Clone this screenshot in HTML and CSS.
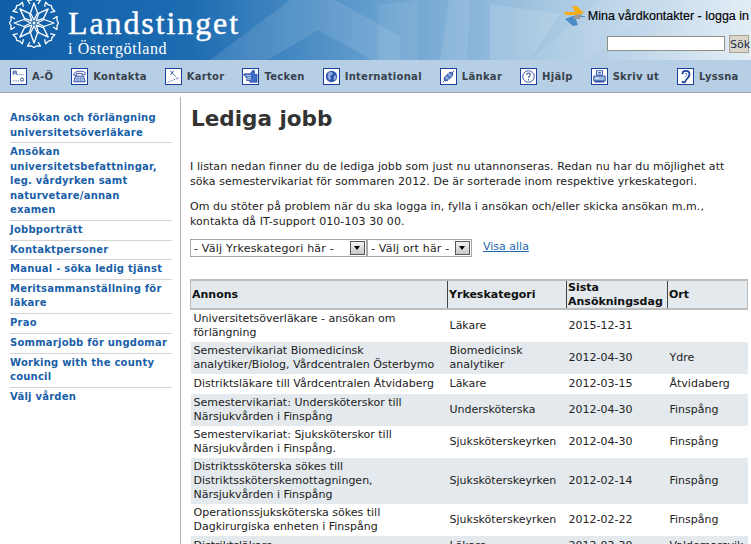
FILE: index.html
```html
<!DOCTYPE html>
<html lang="sv">
<head>
<meta charset="utf-8">
<title>Lediga jobb</title>
<link rel="stylesheet" href="styles.css">
</head>
<body>
<div class="page">
<header class="top">
  <svg class="top-art" viewBox="0 0 751 60" width="751" height="60" aria-hidden="true">
    <path d="M210 60 L290 0 H335 L400 36 L400 60 H372 L318 30 L268 60Z" fill="#fff" opacity=".1"/>
    <path d="M378 60 V5 L418 0 V60Z" fill="#fff" opacity=".08"/>
    <path d="M440 60 L449 0 H470 L467 60Z" fill="#fff" opacity=".1"/>
    <path d="M490 60 V4 L560 14 L530 60Z" fill="#fff" opacity=".12"/>
    <path d="M530 60 L600 0 H660 L590 60Z" fill="#fff" opacity=".08"/>
  </svg>
  <a class="brand" href="#">
    <svg class="flower" viewBox="-25 -25 50 50" width="50" height="50" aria-hidden="true">
      <g fill="none" stroke="#fff" stroke-width="1.3" stroke-linejoin="round">
        <g id="p"><path d="M0 -3 L-3.5 -10 L0 -20 L3.5 -10Z"/><path d="M-4 -19 L-6.5 -23 L-2.5 -23 L0 -24.5 L2.5 -23 L6.5 -23 L4 -19"/></g>
        <use href="#p" transform="rotate(45)"/><use href="#p" transform="rotate(90)"/><use href="#p" transform="rotate(135)"/>
        <use href="#p" transform="rotate(180)"/><use href="#p" transform="rotate(225)"/><use href="#p" transform="rotate(270)"/><use href="#p" transform="rotate(315)"/>
      </g>
      <circle r="1.5" fill="#fff"/>
    </svg>
    <span class="brand-text">
      <span class="brand-name">Landstinget</span>
      <span class="brand-sub">i Östergötland</span>
    </span>
  </a>
  <div class="top-tools">
    <a class="login" href="#">
      <svg viewBox="0 0 24 22" width="24" height="22" aria-hidden="true">
        <path d="M1 7 H12 L9 1 L14 1 L21 8 L14 10 H2Z" fill="#f5ae1a"/>
        <path d="M22 12 H12 L15 20 L10 21 L2 14 L10 11 H22Z" fill="#4a8ac6"/>
        <path d="M12 10 L19 9 L17 14 L10 14Z" fill="#9a9a9a"/>
      </svg>
      <span>Mina vårdkontakter - logga in</span>
    </a>
    <form class="search">
      <input class="search-input" type="text" aria-label="Sök">
      <button class="search-btn" type="button">Sök</button>
    </form>
  </div>
</header>

<nav class="nav">
  <a class="nav-item" href="#"><svg class="ico" viewBox="0 0 17 17"><path d="M2.5 6.5V2.5H6V6.5M2.5 4.5H6" fill="none" stroke="#1c3f9c"/><path d="M7 6.5H15M2 13.5H10" stroke="#1c3f9c" stroke-dasharray="1 1"/><circle cx="12.5" cy="12" r="1.8" fill="none" stroke="#1c3f9c"/></svg><span>A-Ö</span></a>
  <a class="nav-item" href="#"><svg class="ico" viewBox="0 0 17 17"><path d="M2 6C2 2 15 1 15 5V6.5H11.5V5H5V7H2Z" fill="#fff" stroke="#1c3f9c"/><path d="M4 8H13L15 14.5H2Z" fill="#b9cdec" stroke="#1c3f9c"/><path d="M5 10.5H12M5 12.5H12" stroke="#1c3f9c" stroke-dasharray="1 1"/></svg><span>Kontakta</span></a>
  <a class="nav-item" href="#"><svg class="ico" viewBox="0 0 17 17"><path d="M5 2L9 6.5M9 2L5 6.5" stroke="#1c3f9c" fill="none"/><path d="M9 7L14 10.5L8 12.5L2 15" stroke="#1c3f9c" stroke-dasharray="1 1" fill="none"/></svg><span>Kartor</span></a>
  <a class="nav-item" href="#"><svg class="ico" viewBox="0 0 17 17"><path d="M1 5.5H8L11 1.5H13V6H16V15H8L6.5 13H4V11H5V9.5H3V7.5H1Z" fill="#3f6cc4" stroke="#1c3f9c" stroke-width=".7"/><path d="M3 7.5H9M5 9.5H9M4 11.5H9" stroke="#fff" stroke-width=".8"/></svg><span>Tecken</span></a>
  <a class="nav-item" href="#"><svg class="ico" viewBox="0 0 17 17"><circle cx="8.5" cy="8.5" r="6.5" fill="#2a55ad"/><path d="M5 4L9 3L10 6L7 8L8 11L6 13L4 9Z" fill="#8fa9dc"/><path d="M11 8L14 7L14 11L11 13Z" fill="#8fa9dc"/></svg><span>International</span></a>
  <a class="nav-item" href="#"><svg class="ico" viewBox="0 0 17 17"><path d="M2 15L15 2" stroke="#1c3f9c" fill="none"/><ellipse cx="8.5" cy="8.5" rx="6" ry="2.7" transform="rotate(-45 8.5 8.5)" fill="#5d84cf" stroke="#1c3f9c"/><path d="M5 9L9 12M8 5L12 8" stroke="#fff" stroke-width=".8"/></svg><span>Länkar</span></a>
  <a class="nav-item" href="#"><svg class="ico" viewBox="0 0 17 17"><circle cx="8.5" cy="8.5" r="6.5" fill="none" stroke="#1c3f9c"/><path d="M6.5 6.5C6.5 4 10.5 4 10.5 6.5C10.5 8 8.5 8 8.5 10" fill="none" stroke="#1c3f9c" stroke-width="1.2"/><path d="M8.5 11.5V13" stroke="#1c3f9c" stroke-width="1.2"/></svg><span>Hjälp</span></a>
  <a class="nav-item" href="#"><svg class="ico" viewBox="0 0 17 17"><path d="M5 2H12V7H5Z" fill="#fff" stroke="#1c3f9c"/><path d="M6.5 4H10.5M6.5 5.5H10.5" stroke="#1c3f9c" stroke-width=".8"/><path d="M2 8H15V13.5H2Z" fill="#9dbbe6" stroke="#1c3f9c"/><path d="M4 10.5H8" stroke="#fff"/><path d="M3 14.5H14" stroke="#1c3f9c" stroke-width="1.5"/></svg><span>Skriv ut</span></a>
  <a class="nav-item" href="#"><svg class="ico" viewBox="0 0 17 17"><path d="M5 6C5 1 13 1 13 6C13 10 9 11 8.5 14C8 16 5 15.5 5 13.5" fill="none" stroke="#1c3f9c" stroke-width="2"/><path d="M8 6C8 4.5 10 4.5 10 6C10 7.5 8.5 8 8 9.5" fill="none" stroke="#3f6cc4"/></svg><span>Lyssna</span></a>
</nav>

<div class="layout">
  <aside class="side">
    <ul class="side-list">
      <li><a href="#">Ansökan och förlängning universitetsöverläkare</a></li>
      <li><a href="#">Ansökan universitetsbefattningar, leg. vårdyrken samt naturvetare/annan<br>examen</a></li>
      <li><a href="#">Jobbporträtt</a></li>
      <li><a href="#">Kontaktpersoner</a></li>
      <li><a href="#">Manual - söka ledig tjänst</a></li>
      <li><a href="#">Meritsammanställning för läkare</a></li>
      <li><a href="#">Prao</a></li>
      <li><a href="#">Sommarjobb för ungdomar</a></li>
      <li><a href="#">Working with the county council</a></li>
      <li><a href="#">Välj vården</a></li>
    </ul>
  </aside>
  <main class="main">
    <h1 class="title">Lediga jobb</h1>
    <p class="intro">I listan nedan finner du de lediga jobb som just nu utannonseras. Redan nu har du möjlighet att söka semestervikariat för sommaren 2012. De är sorterade inom respektive yrkeskategori.</p>
    <p class="intro">Om du stöter på problem när du ska logga in, fylla i ansökan och/eller skicka ansökan m.m., kontakta då IT-support 010-103 30 00.</p>
    <div class="filters">
      <span class="pick pick-a"><span class="pick-label">- Välj Yrkeskategori här -</span><span class="pick-arrow"></span></span>
      <span class="pick pick-b"><span class="pick-label">- Välj ort här -</span><span class="pick-arrow"></span></span>
      <a class="show-all" href="#">Visa alla</a>
    </div>
    <table class="jobs">
      <colgroup><col class="c1"><col class="c2"><col class="c3"><col class="c4"></colgroup>
      <thead>
        <tr><th>Annons</th><th>Yrkeskategori</th><th>Sista Ansökningsdag</th><th>Ort</th></tr>
      </thead>
      <tbody>
        <tr><td>Universitetsöverläkare - ansökan om förlängning</td><td>Läkare</td><td>2015-12-31</td><td></td></tr>
        <tr><td>Semestervikariat Biomedicinsk analytiker/Biolog, Vårdcentralen Österbymo</td><td>Biomedicinsk analytiker</td><td>2012-04-30</td><td>Ydre</td></tr>
        <tr><td>Distriktsläkare till Vårdcentralen Åtvidaberg</td><td>Läkare</td><td>2012-03-15</td><td>Åtvidaberg</td></tr>
        <tr><td>Semestervikariat: Undersköterskor till Närsjukvården i Finspång</td><td>Undersköterska</td><td>2012-04-30</td><td>Finspång</td></tr>
        <tr><td>Semestervikariat: Sjuksköterskor till Närsjukvården i Finspång.</td><td>Sjuksköterskeyrken</td><td>2012-04-30</td><td>Finspång</td></tr>
        <tr><td>Distriktssköterska sökes till Distriktssköterskemottagningen, Närsjukvården i Finspång</td><td>Sjuksköterskeyrken</td><td>2012-02-14</td><td>Finspång</td></tr>
        <tr><td>Operationssjuksköterska sökes till Dagkirurgiska enheten i Finspång</td><td>Sjuksköterskeyrken</td><td>2012-02-22</td><td>Finspång</td></tr>
        <tr><td>Distriktsläkare</td><td>Läkare</td><td>2012-03-30</td><td>Valdemarsvik</td></tr>
      </tbody>
    </table>
  </main>
</div>
</div>
</body>
</html>
```

FILE: styles.css
```css
html, body { margin: 0; padding: 0; background: #fff; }
.page { width: 751px; height: 544px; overflow: hidden; font-family: "DejaVu Sans", sans-serif; font-size: 11px; color: #222; }
a { text-decoration: none; }

.top { position: relative; height: 60px; display: flex; justify-content: space-between; overflow: hidden;
  background: linear-gradient(90deg, #0f5ea8 0, #1d6cb2 190px, #67a0cf 380px, #a3c5e0 540px, #e3edf6 751px); }
.top-art { position: absolute; left: 0; top: 0; }
.brand { position: relative; display: flex; color: #fff; padding-left: 9px; }
.flower { margin-top: -2px; flex: none; }
.brand-text { display: flex; flex-direction: column; margin-left: 9px; font-family: "Liberation Serif", serif; }
.brand-name { font-size: 32px; line-height: 34px; margin-top: 6px; letter-spacing: 1.9px; -webkit-text-stroke: .4px #fff; }
.brand-sub { font-size: 16px; line-height: 18px; letter-spacing: .6px; }
.top-tools { position: relative; display: flex; flex-direction: column; align-items: flex-end; padding-right: 2px; }
.login { display: flex; align-items: center; gap: 1px; margin-top: 5px; color: #000; font-family: "Liberation Sans", sans-serif; font-size: 12.5px; -webkit-text-stroke: .15px #000; white-space: nowrap; }
.search { display: flex; gap: 4px; margin-top: 8px; }
.search-input { width: 115px; height: 13px; padding: 0 0 0 1px; margin: 1px 0 0; border: 1px solid #8f8f84; background: #fff; border-radius: 0; }
.search-btn { width: 20px; height: 18px; padding: 0; border: 1px solid #a9a393; background: #d9d5c8; font: 11px "DejaVu Sans", sans-serif; color: #1c2c4c; }

.nav { height: 32px; display: flex; align-items: center; padding-left: 10px; background: #b7cfe4; border-bottom: 1px solid #9aa3ac; font-size: 10px; font-weight: 700; }
.nav-item { display: flex; align-items: center; gap: 5px; margin-right: 18px; color: #38424e; letter-spacing: .28px; white-space: nowrap; }
.ico { width: 15px; height: 15px; background: #fff; border: 1px solid #1c3f9c; flex: none; }

.layout { display: flex; align-items: flex-start; margin-top: 4px; }
.side { width: 162px; min-height: 447px; padding: 12px 8px 0 10px; border-right: 1px solid #b4b4b4; flex: none; font-size: 10px; font-weight: 700; line-height: 14.5px; letter-spacing: .23px; }
.side-list { list-style: none; margin: 0; padding: 0; }
.side-list li { padding: 2px 0 2.2px; border-bottom: 1px solid #d4d4d4; }
.side-list li:last-child { border-bottom: 0; }
.side-list a { color: #1a5fa8; }

.main { padding: 0 0 0 9px; flex: 1; min-width: 0; }
.title { margin: 8px 0 0 1px; font-size: 21.5px; line-height: 28px; font-weight: 700; color: #333; }
.intro { margin: 27px 0 0 0; font-size: 11px; line-height: 14.5px; letter-spacing: .07px; color: #222; width: 550px; }
.intro + .intro { margin-top: 11px; }
.filters { display: flex; align-items: flex-start; margin-top: 10px; }
.pick { display: flex; align-items: center; justify-content: space-between; height: 16px; border: 1px solid #a8a8a8; background: #fff; padding-right: 1px; }
.pick-a { width: 174px; }
.pick-b { width: 102px; }
.pick-label { padding-left: 3px; white-space: nowrap; letter-spacing: .2px; }
.pick-arrow { position: relative; width: 15px; height: 14px; background: linear-gradient(#f2f2f2, #c8c8c8); border: 1px solid #555; box-sizing: border-box; }
.pick-arrow::after { content: ""; position: absolute; left: 3px; top: 4px; border: 3.5px solid transparent; border-top: 4px solid #000; border-bottom: 0; }
.show-all { margin: 1px 0 0 11px; color: #1d66b0; text-decoration: underline; line-height: 14px; }

.jobs { width: 557px; margin-top: 22px; border-collapse: collapse; table-layout: fixed; font-size: 11px; }
.c1 { width: 257px; } .c2 { width: 119px; } .c3 { width: 101px; } .c4 { width: 80px; }
.jobs th { background: #e3e9ec; border-top: 2px solid #bdbdbd; border-bottom: 2px solid #bdbdbd; border-right: 1px solid #444; padding: 0 2px 0 1px; text-align: left; font-size: 11px; line-height: 13.5px; color: #111; height: 25px; }
.jobs th:first-child { border-left: 1px solid #bdbdbd; }
.jobs th:last-child { border-right: 1px solid #bdbdbd; }
.jobs td { padding: 2px; height: 16px; line-height: 14px; color: #222; vertical-align: middle; }
.jobs td:first-child { padding-left: 3px; }
.jobs tbody tr:nth-child(even) td { background: #e3e9ec; }
```
